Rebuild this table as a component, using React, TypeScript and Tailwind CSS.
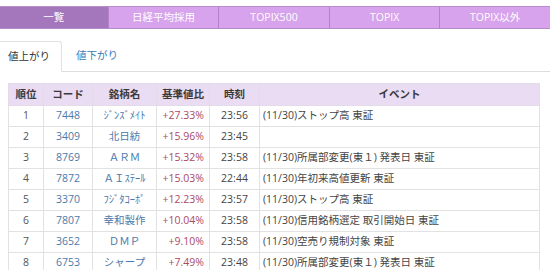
import React from 'react';

const NAV_ITEMS = ["一覧", "日経平均採用", "TOPIX500", "TOPIX", "TOPIX以外"];

interface Row {
  rank: number;
  code: string;
  name: string;
  ratio: string;
  time: string;
  event: string;
}

const ROWS: Row[] = [
  { rank: 1, code: "7448", name: "ｼﾞﾝｽﾞﾒｲﾄ", ratio: "+27.33%", time: "23:56", event: "(11/30)ストップ高 東証" },
  { rank: 2, code: "3409", name: "北日紡", ratio: "+15.96%", time: "23:45", event: "" },
  { rank: 3, code: "8769", name: "ＡＲＭ", ratio: "+15.32%", time: "23:58", event: "(11/30)所属部変更(東１) 発表日 東証" },
  { rank: 4, code: "7872", name: "ＡＩｽﾃｰﾙ", ratio: "+15.03%", time: "22:44", event: "(11/30)年初来高値更新 東証" },
  { rank: 5, code: "3370", name: "ﾌｼﾞﾀｺｰﾎﾟ", ratio: "+12.23%", time: "23:57", event: "(11/30)ストップ高 東証" },
  { rank: 6, code: "7807", name: "幸和製作", ratio: "+10.04%", time: "23:58", event: "(11/30)信用銘柄選定 取引開始日 東証" },
  { rank: 7, code: "3652", name: "ＤＭＰ", ratio: "+9.10%", time: "23:58", event: "(11/30)空売り規制対象 東証" },
  { rank: 8, code: "6753", name: "シャープ", ratio: "+7.49%", time: "23:48", event: "(11/30)所属部変更(東１) 発表日 東証" },
];

export default function App() {
  return (
    <div className="w-[550px] h-[270px] overflow-hidden bg-white text-[10.5px] text-[#444] [font-family:'Open_Sans','Noto_Sans_CJK_JP',sans-serif]">
      {/* category bar */}
      <div className="mt-[6px] flex h-[23px] border-y border-[#b78ccb]">
        {NAV_ITEMS.map((item, i) => (
          <div
            key={item}
            className={
              i === 0
                ? "w-[108px] flex items-center justify-center bg-[#a477bd] text-white"
                : "w-[111px] flex items-center justify-center bg-[#d7a3ec] text-white border-l border-[#b382cb]"
            }
          >
            {item}
          </div>
        ))}
      </div>

      {/* up / down tabs */}
      <div className="mt-[12px] flex h-[31px] border-b border-[#dddddd]">
        <div className="w-[62px] -mb-px flex items-center pl-[8px] bg-white border border-b-white border-[#e2e2e2] border-l-0 rounded-tr-[3px] text-[#333]">
          値上がり
        </div>
        <div className="flex items-center pl-[14px] text-[#3a7bbd]">値下がり</div>
      </div>

      {/* ranking table */}
      <table className="mt-[11px] ml-[8px] w-[532px] table-fixed border-collapse">
        <colgroup>
          <col className="w-[35px]" />
          <col className="w-[49px]" />
          <col className="w-[64px]" />
          <col className="w-[53px]" />
          <col className="w-[50px]" />
          <col />
        </colgroup>
        <thead>
          <tr className="h-[22px] bg-[#eadcf2] text-[#3a3a3a]">
            <th className="border border-[#e3dbe8] font-bold">順位</th>
            <th className="border border-[#e3dbe8] font-bold">コード</th>
            <th className="border border-[#e3dbe8] font-bold">銘柄名</th>
            <th className="border border-[#e3dbe8] font-bold">基準値比</th>
            <th className="border border-[#e3dbe8] font-bold">時刻</th>
            <th className="border border-[#e3dbe8] font-bold">イベント</th>
          </tr>
        </thead>
        <tbody>
          {ROWS.map((r) => (
            <tr key={r.rank} className="h-[21px]">
              <td className="border border-[#e2e2e2] text-center text-[#555]">{r.rank}</td>
              <td className="border border-[#e2e2e2] text-center text-[#4b7aab]">{r.code}</td>
              <td className="border border-[#e2e2e2] text-center text-[#4b7aab] whitespace-nowrap">{r.name}</td>
              <td className="border border-[#e2e2e2] text-right pr-[5px] text-[#ad4a5f]">{r.ratio}</td>
              <td className="border border-[#e2e2e2] text-center text-[#444]">{r.time}</td>
              <td className="border border-[#e2e2e2] pl-[3px] text-[#444] whitespace-nowrap">{r.event}</td>
            </tr>
          ))}
        </tbody>
      </table>
    </div>
  );
}
